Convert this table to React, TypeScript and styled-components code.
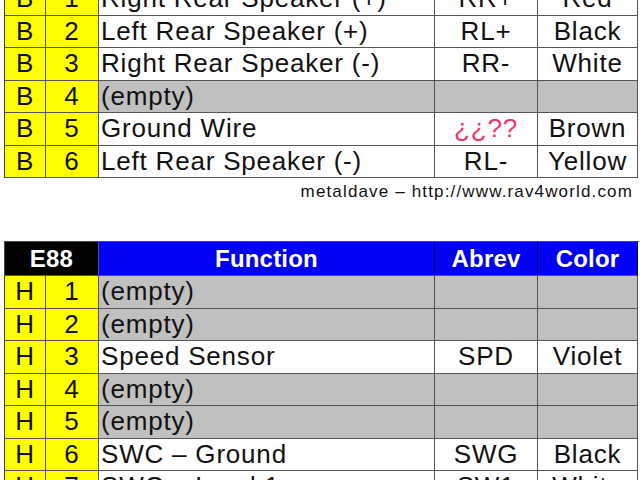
import styled, { createGlobalStyle } from "styled-components";

const GlobalStyle = createGlobalStyle`
  html, body {
    margin: 0;
    padding: 0;
    background: #fff;
    overflow: hidden;
  }
  body {
    font-family: "Liberation Sans", Arial, Helvetica, sans-serif;
    color: #111;
  }
`;

const Page = styled.div`
  width: 640px;
  height: 480px;
  overflow: hidden;
  padding-left: 4px;
  box-sizing: border-box;
  display: flex;
  flex-direction: column;

  & > * {
    flex-shrink: 0;
  }
`;

const Sheet = styled.div<{ $offset: number; $head?: boolean }>`
  display: grid;
  grid-template-columns: 41px 53px 336px 103px 100px;
  grid-template-rows: ${(p) => (p.$head ? "34px" : "32.5px")};
  grid-auto-rows: 32.5px;
  width: 634px;
  margin-top: ${(p) => p.$offset}px;
  border-left: 1px solid #444;
  border-top: 1px solid #444;
`;

type Tone = "pin" | "empty" | "plain" | "head" | "title";

const toneBg: Record<Tone, string> = {
  pin: "#ffff00",
  empty: "#c0c0c0",
  plain: "#ffffff",
  head: "#000000",
  title: "#0000f4",
};

const Cell = styled.div<{ $tone: Tone; $left?: boolean; $span?: number }>`
  grid-column: span ${(p) => p.$span ?? 1};
  display: flex;
  align-items: center;
  justify-content: ${(p) => (p.$left ? "flex-start" : "center")};
  padding-left: ${(p) => (p.$left ? "2px" : "0")};
  background: ${(p) => toneBg[p.$tone]};
  border-right: 1px solid ${(p) => (p.$tone === "title" ? "#000050" : "#555")};
  border-bottom: 1px solid #555;
  font-size: 26px;
  letter-spacing: 0.8px;
  white-space: nowrap;
  overflow: hidden;
  color: ${(p) => (p.$tone === "head" || p.$tone === "title" ? "#fff" : "#111")};
  font-weight: ${(p) => (p.$tone === "head" || p.$tone === "title" ? 700 : 400)};
`;

const HeadCell = styled(Cell)`
  font-size: 24px;
  letter-spacing: 0.2px;
`;

const Unknown = styled.span`
  color: #ec3468;
`;

const Credit = styled.div`
  height: 27px;
  width: 629px;
  display: flex;
  align-items: center;
  justify-content: flex-end;
  font-size: 17px;
  letter-spacing: 1.15px;
  color: #111;
`;

const Spacer = styled.div`
  height: 36px;
`;

type Row = {
  side: string;
  pin: number;
  fn?: string;
  abbr?: React.ReactNode;
  color?: string;
};

const rowsB: Row[] = [
  { side: "B", pin: 1, fn: "Right Rear Speaker (+)", abbr: "RR+", color: "Red" },
  { side: "B", pin: 2, fn: "Left Rear Speaker (+)", abbr: "RL+", color: "Black" },
  { side: "B", pin: 3, fn: "Right Rear Speaker (-)", abbr: "RR-", color: "White" },
  { side: "B", pin: 4 },
  { side: "B", pin: 5, fn: "Ground Wire", abbr: <Unknown>¿¿??</Unknown>, color: "Brown" },
  { side: "B", pin: 6, fn: "Left Rear Speaker (-)", abbr: "RL-", color: "Yellow" },
];

const rowsH: Row[] = [
  { side: "H", pin: 1 },
  { side: "H", pin: 2 },
  { side: "H", pin: 3, fn: "Speed Sensor", abbr: "SPD", color: "Violet" },
  { side: "H", pin: 4 },
  { side: "H", pin: 5 },
  { side: "H", pin: 6, fn: "SWC – Ground", abbr: "SWG", color: "Black" },
  { side: "H", pin: 7, fn: "SWC – Lead 1", abbr: "SW1", color: "White" },
];

const PinRow = ({ row }: { row: Row }) => {
  const tone: Tone = row.fn ? "plain" : "empty";
  return (
    <>
      <Cell $tone="pin">{row.side}</Cell>
      <Cell $tone="pin">{row.pin}</Cell>
      <Cell $tone={tone} $left>
        {row.fn ?? "(empty)"}
      </Cell>
      <Cell $tone={tone}>{row.abbr}</Cell>
      <Cell $tone={tone}>{row.color}</Cell>
    </>
  );
};

export default function App() {
  return (
    <>
      <GlobalStyle />
      <Page>
        <Sheet $offset={-18}>
          {rowsB.map((r) => (
            <PinRow key={r.pin} row={r} />
          ))}
        </Sheet>
        <Credit>metaldave – http://www.rav4world.com</Credit>
        <Spacer />
        <Sheet $offset={0} $head>
          <HeadCell $tone="head" $span={2}>
            E88
          </HeadCell>
          <HeadCell $tone="title">Function</HeadCell>
          <HeadCell $tone="title">Abrev</HeadCell>
          <HeadCell $tone="title">Color</HeadCell>
          {rowsH.map((r) => (
            <PinRow key={r.pin} row={r} />
          ))}
        </Sheet>
      </Page>
    </>
  );
}
